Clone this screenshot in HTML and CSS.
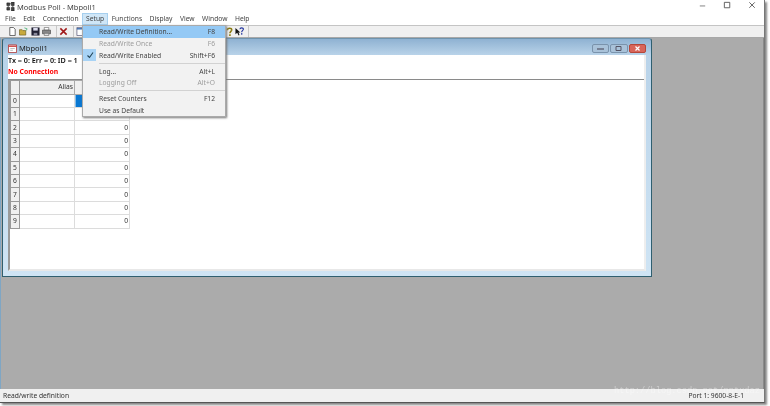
FILE: index.html
```html
<!DOCTYPE html>
<html lang="en">
<head>
  <meta charset="UTF-8" />
  <title>Modbus Poll - Mbpoll1</title>
  <link rel="stylesheet" href="styles.css">
</head>
<body>
  <div class="app">
    <div class="titlebar">
      <svg class="app-icon" viewBox="0 0 10 10"><path d="M1 1h3v3H1zM6 0h3v4H6zM1 6h3v3H1zM6 6h3v4H6zM4 2h2M2.5 4v2M7.5 4v2" fill="#444" stroke="#222" stroke-width=".7"/></svg>
      <span class="app-title">Modbus Poll - Mbpoll1</span>
      <div class="win-btns">
        <svg viewBox="0 0 10 10"><path d="M2 5.5h6" stroke="#777"/></svg>
        <svg viewBox="0 0 10 10"><path d="M1.5 1.5h6v6h-6z" fill="none" stroke="#555"/></svg>
        <svg viewBox="0 0 10 10"><path d="M1.5 1.5l6 6M7.5 1.5l-6 6" stroke="#555"/></svg>
      </div>
    </div>

    <div class="menubar">
      <span>File</span>
      <span>Edit</span>
      <span>Connection</span>
      <span class="active">Setup</span>
      <span>Functions</span>
      <span>Display</span>
      <span>View</span>
      <span>Window</span>
      <span>Help</span>
    </div>

    <div class="toolbar">
      <svg viewBox="0 0 10 10"><path d="M2 .5h4l2 2v7H2z" fill="#fff" stroke="#333" stroke-width=".8"/></svg>
      <svg viewBox="0 0 10 10"><path d="M.5 3h3l1 1h3v5h-7z" fill="#c8a93c" stroke="#665a1c" stroke-width=".7"/><path d="M6 1l3 1-1 2" fill="none" stroke="#3a6" stroke-width=".8"/></svg>
      <svg viewBox="0 0 10 10"><path d="M.5.5h9v9h-9z" fill="#223"/><path d="M2.5 1h5v3h-5z" fill="#dde"/><path d="M3 6.5h4v3H3z" fill="#889"/></svg>
      <svg viewBox="0 0 10 10"><path d="M2.5.5h5v3h-5z" fill="#fff" stroke="#666" stroke-width=".7"/><path d="M.5 3.5h9v4h-9z" fill="#888" stroke="#444" stroke-width=".7"/><path d="M2.5 7h5v2.5h-5z" fill="#ddd" stroke="#666" stroke-width=".7"/></svg>
      <i class="tool-sep"></i>
      <svg viewBox="0 0 10 10"><path d="M1.5 1.5l7 7M8.5 1.5l-7 7" stroke="#a01818" stroke-width="1.7"/></svg>
      <i class="tool-sep"></i>
      <svg viewBox="0 0 10 10"><path d="M1 .5h8v9H1z" fill="#fff" stroke="#557" stroke-width=".8"/><path d="M1 2h8" stroke="#36a" stroke-width="1.5"/></svg>
      <div class="help-tools">
        <svg class="help-q" viewBox="0 0 8 10"><path d="M1.5 3.5C1.5.5 7 .5 6.5 3.5 6.2 5 4.5 5 4.5 7M4.5 8v2" fill="none" stroke="#8a7a10" stroke-width="1.8"/></svg>
        <svg viewBox="0 0 10 10"><path d="M.5 1v7l2-1.5L4 9.5l1-.5-1.2-3H6z" fill="#111"/><path d="M5.5 2.5C5.5.5 9.5.5 9.3 2.500 9.2 4 7.5 4 7.5 5.500M7.5 6.500v2" fill="none" stroke="#1c2f9c" stroke-width="1.2"/></svg>
        <i class="tool-sep"></i>
      </div>
    </div>

    <div class="mdi">
      <div class="child">
        <div class="child-title">
          <svg class="child-icon" viewBox="0 0 10 10"><path d="M.5 1h9v8.5H.5z" fill="#fff" stroke="#a33" stroke-width=".9"/><path d="M.5 2.5h9" stroke="#c44" stroke-width="1.5"/><path d="M2.5 5h5M2.5 7h3" stroke="#999" stroke-width=".7"/></svg>
          <span>Mbpoll1</span>
          <div class="child-btns">
            <b><svg viewBox="0 0 9 5"><path d="M1 3h7" stroke="#556" stroke-width="1.2"/></svg></b>
            <b><svg viewBox="0 0 9 5"><path d="M2 .5h5v4H2z" fill="none" stroke="#556"/></svg></b>
            <b class="close"><svg viewBox="0 0 9 5"><path d="M2.5.5l4 4M6.5.5l-4 4" stroke="#fff" stroke-width="1.2"/></svg></b>
          </div>
        </div>
        <div class="child-body">
          <div class="status-head">
            <div class="stats">Tx = 0: Err = 0: ID = 1</div>
            <div class="no-conn">No Connection</div>
          </div>
          <table class="grid">
            <tr class="head"><th></th><th class="alias">Alias</th><th class="val"></th></tr>
            <tr><th>0</th><td></td><td class="val selected"></td></tr>
            <tr><th>1</th><td></td><td class="val"></td></tr>
            <tr><th>2</th><td></td><td class="val">0</td></tr>
            <tr><th>3</th><td></td><td class="val">0</td></tr>
            <tr><th>4</th><td></td><td class="val">0</td></tr>
            <tr><th>5</th><td></td><td class="val">0</td></tr>
            <tr><th>6</th><td></td><td class="val">0</td></tr>
            <tr><th>7</th><td></td><td class="val">0</td></tr>
            <tr><th>8</th><td></td><td class="val">0</td></tr>
            <tr><th>9</th><td></td><td class="val">0</td></tr>
          </table>
        </div>
      </div>
    </div>

    <div class="statusbar">
      <span>Read/write definition</span>
      <span class="port">Port 1: 9600-8-E-1</span>
    </div>

    <div class="menu">
      <div class="item current"><em></em><span>Read/Write Definition...</span><kbd>F8</kbd></div>
      <div class="item off"><em></em><span>Read/Write Once</span><kbd>F6</kbd></div>
      <div class="item"><em class="check"><svg viewBox="0 0 10 10"><path d="M2.5 5.5l2 2 3.5-5" fill="none" stroke="#245" stroke-width="1.1"/></svg></em><span>Read/Write Enabled</span><kbd>Shift+F6</kbd></div>
      <hr>
      <div class="item"><em></em><span>Log...</span><kbd>Alt+L</kbd></div>
      <div class="item off"><em></em><span>Logging Off</span><kbd>Alt+O</kbd></div>
      <hr>
      <div class="item"><em></em><span>Reset Counters</span><kbd>F12</kbd></div>
      <div class="item"><em></em><span>Use as Default</span><kbd></kbd></div>
    </div>

    <div class="watermark">http://blog.csdn.net/pptxdaz</div>
  </div>
</body>
</html>
```

FILE: styles.css
```css
* {
  box-sizing: border-box;
}

html,
body {
  margin: 0;
  height: 100%;
  background: #fff;
  overflow: hidden;
}

body {
  font-family: "Noto Sans", "Open Sans", sans-serif;
  font-size: 6.7px;
  color: #333;
}

.app {
  position: relative;
  width: 765px;
  height: 403px;
  display: flex;
  flex-direction: column;
  background: #fff;
  border-right: 1px solid #777;
  border-bottom: 1px solid #555;
  box-shadow: 2px 2px 2px #888;
  filter: blur(.3px);
}

.titlebar {
  height: 14px;
  display: flex;
  align-items: center;
  padding-left: 6px;
  font-size: 7.5px;
}

.app-icon {
  width: 9px;
  height: 9px;
  margin-right: 2px;
}

.app-title {
  color: #444;
}

.win-btns {
  margin-left: auto;
  display: flex;
  gap: 16px;
  padding: 0 7px 2px 0;
}

.win-btns svg {
  width: 9px;
  height: 9px;
}

.menubar {
  height: 11px;
  display: flex;
  align-items: center;
  padding-left: 2px;
}

.menubar span {
  padding: 0 3px;
  margin-right: 1.5px;
  line-height: 10px;
  color: #444;
}

.menubar .active {
  background: #cfe6f7;
  outline: 1px solid #a6cfee;
}

.toolbar {
  height: 14px;
  display: flex;
  align-items: center;
  gap: 2.5px;
  padding-left: 7.5px;
  background: #f0f0f0;
  border-top: 1px solid #c4c4c4;
  border-bottom: 1px solid #a8a8a8;
}

.toolbar svg {
  width: 9px;
  height: 9px;
  flex: none;
}

.tool-sep {
  width: 1px;
  height: 11px;
  margin-left: 2px;
  background: #c8c8c8;
}

.help-tools {
  margin-left: 138px;
  display: flex;
  align-items: center;
  gap: 2px;
}

.toolbar .help-q {
  width: 7px;
}

.mdi {
  flex: 1;
  padding: 0 112px 112px 1px;
  background: #ababab;
  border-left: 1px solid #7fa6c4;
  border-right: 1px solid #8a8a8a;
}

.child {
  width: 650px;
  height: 239px;
  display: flex;
  flex-direction: column;
  padding: 0 5px 5px 5px;
  background: linear-gradient(#8fb2d2, #b9d3e9 16px, #cfe4f4);
  border: 1px solid #2f5f70;
  border-top-color: #6f93ad;
  border-radius: 3px 3px 0 0;
}

.child-title {
  height: 16px;
  flex: none;
  display: flex;
  align-items: center;
  padding-top: 2px;
  font-size: 7.5px;
  color: #222;
}

.child-icon {
  width: 9px;
  height: 9px;
  margin-right: 2px;
}

.child-btns {
  margin-left: auto;
  display: flex;
  gap: 1px;
}

.child-btns b {
  width: 17.5px;
  height: 9px;
  display: flex;
  align-items: center;
  justify-content: center;
  background: #a9c2d9;
  border: 1px solid #7a93ac;
  border-radius: 2px;
}

.child-btns .close {
  background: #d8655a;
  border-color: #b5473a;
}

.child-btns svg {
  width: 9px;
  height: 5px;
}

.child-body {
  flex: 1;
  background: #fff;
  border-left: 2px solid #9a9a9a;
  border-right: 2px solid #eee;
  border-bottom: 2px solid #e8e8e8;
}

.status-head {
  height: 25px;
  margin-left: -2px;
  background: #fff;
  border-bottom: 1px solid #8a8a8a;
  font-size: 7.2px;
  line-height: 11px;
  font-weight: 600;
  color: #111;
}

.no-conn {
  color: #f00;
  font-size: 6.8px;
  font-weight: 700;
}

.grid {
  border-collapse: collapse;
  table-layout: fixed;
  width: 119px;
}

.grid th,
.grid td {
  height: 13.4px;
  padding: 0 1px;
  border: 1px solid #dcdcdc;
  font-weight: 400;
  line-height: 8px;
}

.grid th:first-child {
  width: 9px;
  background: #f0f0f0;
  border: 1px solid #999;
  text-align: center;
}

.grid .alias {
  width: 55px;
  background: #f0f0f0;
  text-align: right;
  border-color: #aaa;
}

.grid .head .val {
  width: 55px;
  background: #f0f0f0;
  border-color: #aaa;
}

.grid .val {
  text-align: right;
}

.grid .selected {
  background: linear-gradient(90deg, #0a78d2 28%, #fff 28%);
}

.statusbar {
  height: 13px;
  display: flex;
  align-items: center;
  justify-content: space-between;
  padding: 0 20px 0 3px;
  background: #f0f0f0;
  color: #333;
}

.menu {
  position: absolute;
  left: 82px;
  top: 25px;
  width: 144px;
  background: #f2f2f2;
  border: 1px solid #aaa;
  box-shadow: 1px 1px 2px #777;
}

.item {
  display: flex;
  align-items: center;
  height: 11.7px;
  color: #444;
}

.item em {
  width: 13px;
  height: 11.7px;
  margin-right: 3px;
  flex: none;
}

.item .check {
  display: flex;
  align-items: center;
  justify-content: center;
  background: #a8d3f5;
}

.item .check svg {
  width: 10px;
  height: 10px;
}

.item span {
  flex: 1;
}

.item kbd {
  font: inherit;
  padding-right: 10px;
}

.item.current {
  background: #94c9f5;
}

.item.off {
  color: #9c9c9c;
}

.menu hr {
  height: 1px;
  margin: 1.65px 0 1.65px 16px;
  border: 0;
  background: #d2d2d2;
}

.watermark {
  position: absolute;
  right: 4px;
  bottom: 6px;
  font-family: "Liberation Mono", monospace;
  font-size: 8.7px;
  color: rgba(255, 255, 255, .4);
}
```
